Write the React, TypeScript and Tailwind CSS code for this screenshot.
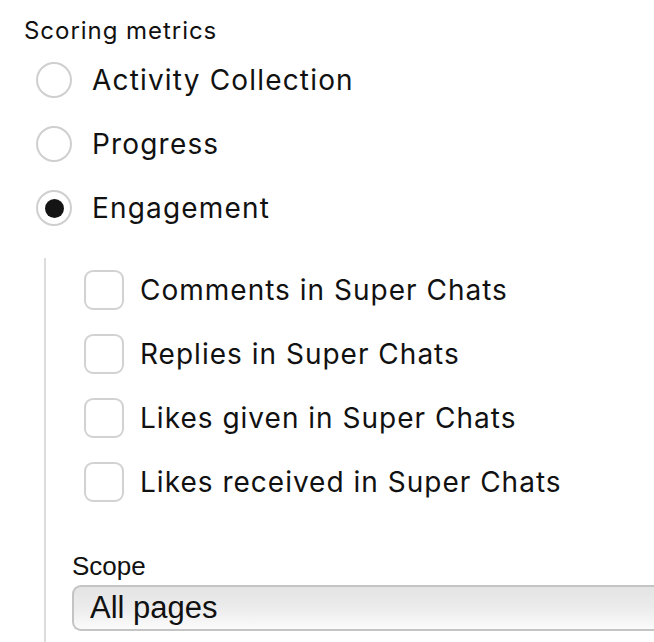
import { useState } from "react";

const metrics = ["Activity Collection", "Progress", "Engagement"];

const engagementOptions = [
  "Comments in Super Chats",
  "Replies in Super Chats",
  "Likes given in Super Chats",
  "Likes received in Super Chats",
];

export default function App() {
  const [metric, setMetric] = useState("Engagement");
  const [checked, setChecked] = useState<string[]>([]);

  const toggle = (name: string) => {
    setChecked((prev) =>
      prev.includes(name) ? prev.filter((n) => n !== name) : [...prev, name]
    );
  };

  return (
    <div className="w-[654px] h-[642px] overflow-hidden bg-white text-[#111111] font-['Inter',sans-serif]">
      <div className="pl-6 pt-[16px]">
        <div className="text-[24px] leading-[30px] h-[32px] tracking-[0.04em]">
          Scoring metrics
        </div>

        <div className="flex flex-col pl-3">
          {metrics.map((m) => (
            <label
              key={m}
              className="flex items-center h-[64px] cursor-pointer"
              onClick={() => setMetric(m)}
            >
              <span className="w-9 h-9 rounded-full border-2 border-[#cfcfcf] flex items-center justify-center">
                {metric === m && (
                  <span className="w-[19px] h-[19px] rounded-full bg-[#141414]" />
                )}
              </span>
              <span className="ml-5 text-[28px] tracking-[0.042em]">{m}</span>
            </label>
          ))}
        </div>

        <div className="ml-5 mt-[18px] border-l-2 border-[#dcdcdc] pl-[26px] pb-10">
          <div className="flex flex-col pl-3">
            {engagementOptions.map((o) => (
              <label
                key={o}
                className="flex items-center h-[64px] cursor-pointer"
                onClick={() => toggle(o)}
              >
                <span className="w-10 h-10 rounded-[9px] border-2 border-[#d2d2d2] bg-white flex items-center justify-center">
                  {checked.includes(o) && (
                    <span className="w-4 h-4 rounded-sm bg-[#141414]" />
                  )}
                </span>
                <span className="ml-4 text-[28px] tracking-[0.036em]">{o}</span>
              </label>
            ))}
          </div>

          <div className="mt-[36px] text-[26px] leading-[32px] font-['Liberation_Sans',sans-serif]">
            Scope
          </div>
          <div className="mt-[3px] w-[640px] h-[46px] rounded-l-[9px] border-2 border-r-0 border-[#c4c4c4] bg-gradient-to-b from-[#e4e4e4] via-[#ececec] to-[#fbfbfb] flex items-center pl-[16px] text-[31px] font-['Liberation_Sans',sans-serif]">
            All pages
          </div>
        </div>
      </div>
    </div>
  );
}
